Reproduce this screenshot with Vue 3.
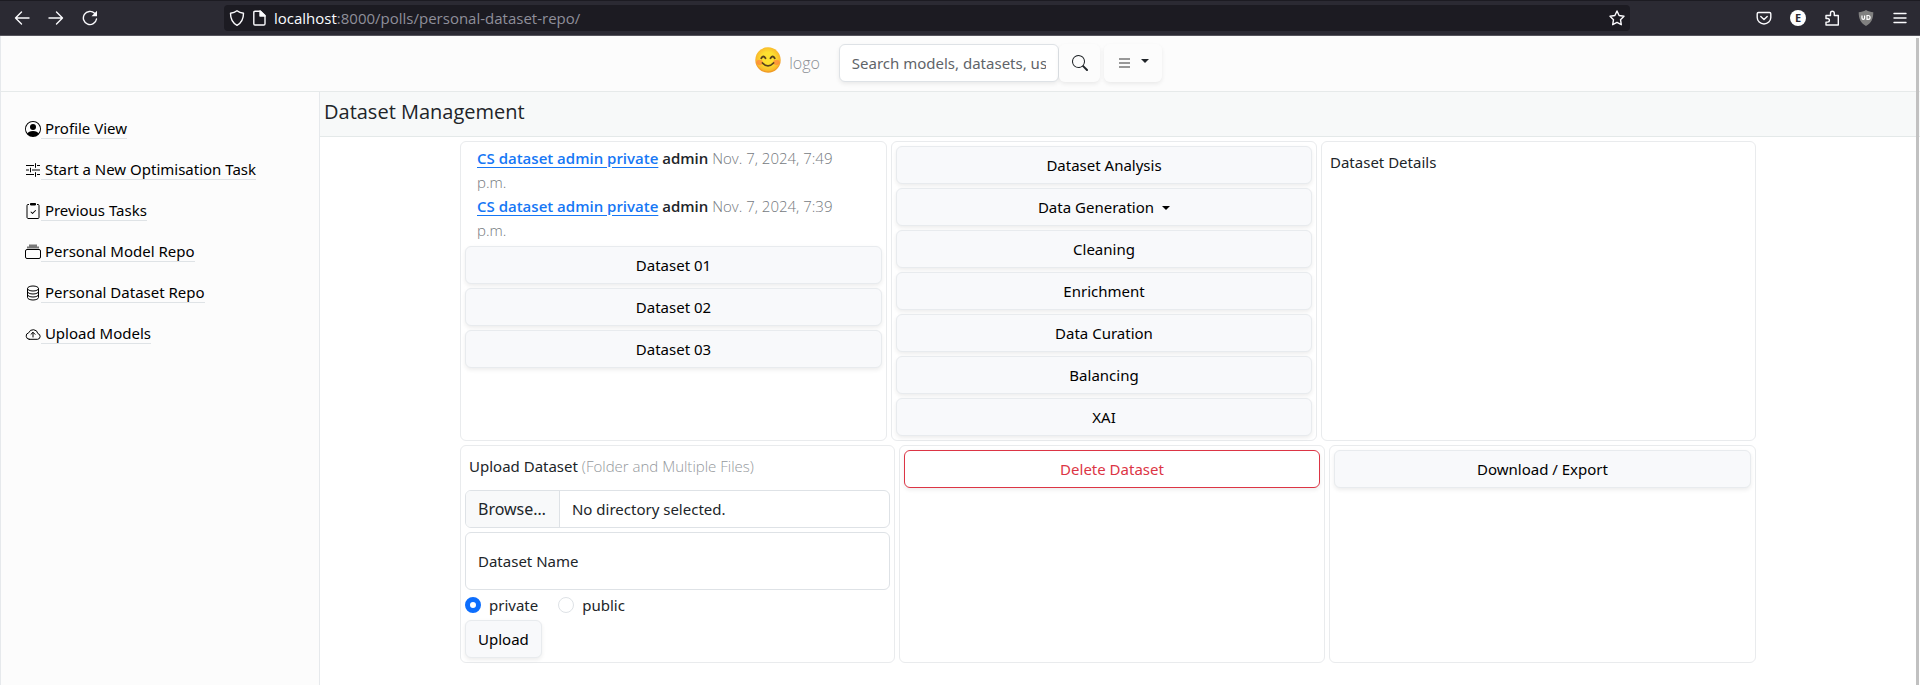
<script setup>
import { ref } from 'vue'

const navItems = [
  { label: 'Profile View', icon: 'person' },
  { label: 'Start a New Optimisation Task', icon: 'sliders' },
  { label: 'Previous Tasks', icon: 'clipboard' },
  { label: 'Personal Model Repo', icon: 'collection' },
  { label: 'Personal Dataset Repo', icon: 'database' },
  { label: 'Upload Models', icon: 'cloud' },
]

const records = [
  { name: 'CS dataset admin private', owner: 'admin', date: 'Nov. 7, 2024, 7:49 p.m.' },
  { name: 'CS dataset admin private', owner: 'admin', date: 'Nov. 7, 2024, 7:39 p.m.' },
]

const datasets = ['Dataset 01', 'Dataset 02', 'Dataset 03']

const actions = [
  { label: 'Dataset Analysis' },
  { label: 'Data Generation', menu: true },
  { label: 'Cleaning' },
  { label: 'Enrichment' },
  { label: 'Data Curation' },
  { label: 'Balancing' },
  { label: 'XAI' },
]

const visibility = ref('private')
const datasetName = ref('')
</script>

<template>
  <div class="window">
    <div class="toolbar">
      <div class="tools">
        <button class="tool" aria-label="Back">
          <svg viewBox="0 0 16 16" class="line"><path d="M15 8H1.500M7.500 2 1.500 8l6 6" /></svg>
        </button>
        <button class="tool" aria-label="Forward">
          <svg viewBox="0 0 16 16" class="line"><path d="M1 8h13.500M8.500 2l6 6-6 6" /></svg>
        </button>
        <button class="tool" aria-label="Reload">
          <svg viewBox="0 0 16 16" class="line"><path d="M14.500 9A6.600 6.600 0 1 1 12.600 3.300L14 4.700" /><path d="M15 .8v5.500H9.500z" fill="#fbfbfe" stroke="none" /></svg>
        </button>
      </div>
      <div class="address">
        <svg viewBox="0 0 16 16" class="line"><path d="M8 .8c2 1.600 4 2.200 6.500 2.500C14.500 9 12.500 13 8 15.300 3.500 13 1.500 9 1.500 3.300 4 3 6 2.400 8 .8z" /></svg>
        <svg viewBox="0 0 16 16" class="line"><path d="M4 1.200h5.500L14 5.500v8.300q0 1.200-1.200 1.200H4q-1.200 0-1.200-1.200V2.400q0-1.200 1.200-1.200z" /><path d="M9 1v5h5z" fill="#fbfbfe" /></svg>
        <span class="url"><b>localhost</b>:8000/polls/personal-dataset-repo/</span>
        <svg viewBox="0 0 16 16" class="line"><path d="m8 1 2.100 4.500 4.900.7-3.500 3.500.8 5L8 12.400l-4.300 2.300.8-5L1 6.200l4.900-.7z" /></svg>
      </div>
      <div class="extensions">
        <button class="tool" aria-label="Pocket">
          <svg viewBox="0 0 16 16" class="line"><path d="M2.500 2.500h11q1.300 0 1.300 1.300V7.500a6.800 6.500 0 0 1-13.600 0V3.800q0-1.300 1.300-1.300z" /><path d="m4.800 6.500 3.200 3 3.200-3" /></svg>
        </button>
        <button class="tool" aria-label="Account"><span class="avatar">E</span></button>
        <button class="tool" aria-label="Extensions">
          <svg viewBox="0 0 16 16" class="line"><path d="M2 15h12.300V5.500h-4V3.200a1.900 1.900 0 0 0-3.800 0v2.300H2v3h1.600a1.800 1.800 0 0 1 0 3.600H2z" /></svg>
        </button>
        <button class="tool" aria-label="Ad blocker">
          <svg viewBox="0 0 16 16"><path d="M8 0c2.500 1.500 4.500 1.800 7.300 2.200C15.300 8.500 13.500 13 8 16 2.500 13 .7 8.500.7 2.200 3.500 1.800 5.500 1.500 8 0z" fill="#808080" /><path d="M4 5.500V8a1.300 1.300 0 0 0 2.600 0V5.500M9 5.500h1.200a1.900 1.900 0 0 1 0 3.800H9z" fill="none" stroke="#fff" stroke-width="1.200" /></svg>
        </button>
        <button class="tool" aria-label="Menu">
          <svg viewBox="0 0 16 16" class="line"><path d="M2 3.500h12M2 8h12M2 12.500h12" /></svg>
        </button>
      </div>
    </div>

    <div class="page">
      <header class="header">
        <a class="brand" href="#">
          <svg viewBox="0 0 26 26">
            <defs>
              <radialGradient id="face" cx="50%" cy="45%" r="52%">
                <stop offset="50%" stop-color="#fde030" />
                <stop offset="90%" stop-color="#f9b92b" />
                <stop offset="100%" stop-color="#f09a24" />
              </radialGradient>
            </defs>
            <circle cx="13" cy="13" r="12.700" fill="url(#face)" />
            <ellipse cx="4.700" cy="15.300" rx="3.300" ry="2.600" fill="#ff7043" opacity=".55" />
            <ellipse cx="21.300" cy="15.300" rx="3.300" ry="2.600" fill="#ff7043" opacity=".55" />
            <g fill="none" stroke="#59411c" stroke-width="1.800" stroke-linecap="round">
              <path d="M6.300 11.300q2-3.600 4.200 0M15.500 11.300q2.200-3.600 4.200 0" />
              <path d="M7.500 16q5.500 5.800 11 0" />
            </g>
          </svg>
          <span>logo</span>
        </a>
        <form class="search" @submit.prevent>
          <input type="text" aria-label="Search" placeholder="Search models, datasets, users" />
          <button class="ghost" aria-label="Submit search">
            <svg viewBox="0 0 16 16" fill="#212529"><path d="M11.742 10.344a6.500 6.500 0 1 0-1.397 1.398h-.001c.03.04.062.078.098.115l3.850 3.850a1 1 0 0 0 1.415-1.414l-3.850-3.850a1.007 1.007 0 0 0-.115-.1zM12 6.500a5.500 5.500 0 1 1-11 0 5.500 5.500 0 0 1 11 0z" /></svg>
          </button>
        </form>
        <button class="ghost menu" aria-label="Open menu">
          <svg viewBox="0 0 12 16" class="burger"><path d="M0 4h11M0 8h11M0 12h11" stroke="#777" stroke-width="1.700" /></svg>
          <i class="caret"></i>
        </button>
      </header>

      <div class="body">
        <nav class="sidebar">
          <a v-for="item in navItems" :key="item.label" href="#">
            <svg viewBox="0 0 16 16" fill="#000">
              <template v-if="item.icon === 'person'">
                <path d="M11 6a3 3 0 1 1-6 0 3 3 0 0 1 6 0z" />
                <path fill-rule="evenodd" d="M0 8a8 8 0 1 1 16 0A8 8 0 0 1 0 8zm8-7a7 7 0 0 0-5.468 11.370C3.242 11.226 4.805 10 8 10s4.757 1.225 5.468 2.370A7 7 0 0 0 8 1z" />
              </template>
              <path v-else-if="item.icon === 'sliders'" d="M1 3.500h8M12 3.500h3M10.500 1.200v4.600M1 8h3M7 8h8M5.500 5.700v4.600M1 12.500h8M12 12.500h3M10.500 10.200v4.600" fill="none" stroke="#000" />
              <template v-else-if="item.icon === 'clipboard'">
                <path fill-rule="evenodd" d="M10.854 7.146a.5.5 0 0 1 0 .708l-3 3a.5.5 0 0 1-.708 0l-1.500-1.500a.5.5 0 1 1 .708-.708L7.500 9.793l2.646-2.647a.5.5 0 0 1 .708 0z" />
                <path d="M4 1.500H3a1 1 0 0 0-1 1v12a1.500 1.500 0 0 0 1 1h10a1 1 0 0 0 1-1v-12a1 1 0 0 0-1-1h-1" fill="none" stroke="#000" />
                <path d="M5.500.5h5v1.500h-5z" stroke="#000" />
              </template>
              <template v-else-if="item.icon === 'collection'">
                <path d="M4 1.500h8M2 3.500h12" stroke="#777" stroke-width="2" />
                <rect x=".5" y="5.500" width="15" height="9" rx="1.500" fill="none" stroke="#000" />
              </template>
              <g v-else-if="item.icon === 'database'" fill="none" stroke="#000">
                <ellipse cx="8" cy="3.500" rx="5.500" ry="2.500" />
                <path d="M2.500 3.500v9c0 1.400 2.500 2.500 5.500 2.500s5.500-1.100 5.500-2.500v-9M2.500 6.500C2.500 7.900 5 9 8 9s5.500-1.100 5.500-2.500M2.500 9.500C2.500 10.900 5 12 8 12s5.500-1.100 5.500-2.500" />
              </g>
              <g v-else fill="none" stroke="#000" stroke-linecap="round" stroke-linejoin="round">
                <path d="M4.200 13.300h8.400a2.900 2.900 0 0 0 .3-5.700A4.800 4.800 0 0 0 3.700 6.800 3.300 3.300 0 0 0 4.200 13.300z" />
                <path d="M8 11V6.500M6 8.300l2-2 2 2" />
              </g>
            </svg>
            <span>&nbsp;{{ item.label }}</span>
          </a>
        </nav>

        <main class="content">
          <h1>Dataset Management</h1>
          <div class="grid">
            <div class="row row-top">
              <section class="panel">
                <div class="records">
                  <p v-for="record in records" :key="record.date">
                    <a href="#">{{ record.name }}</a> <strong>{{ record.owner }}</strong>
                    <span class="light">{{ ' ' + record.date }}</span>
                  </p>
                </div>
                <button v-for="name in datasets" :key="name" class="btn">{{ name }}</button>
              </section>
              <section class="panel">
                <button v-for="action in actions" :key="action.label" class="btn">
                  {{ action.label }}<i v-if="action.menu" class="caret"></i>
                </button>
              </section>
              <section class="panel">
                <h2>Dataset Details</h2>
              </section>
            </div>

            <div class="row row-bottom">
              <form class="panel" @submit.prevent>
                <h2 class="upload-title">Upload Dataset <span class="light">(Folder and Multiple Files)</span></h2>
                <label class="file" for="folder">
                  <span class="browse">Browse…</span>
                  <span class="chosen">No directory selected.</span>
                  <input id="folder" type="file" webkitdirectory multiple />
                </label>
                <input v-model="datasetName" class="name" type="text" aria-label="Dataset Name" placeholder="Dataset Name" />
                <div class="radios">
                  <label><input v-model="visibility" type="radio" name="visibility" value="private" />private</label>
                  <label><input v-model="visibility" type="radio" name="visibility" value="public" />public</label>
                </div>
                <button class="btn upload">Upload</button>
              </form>
              <section class="panel">
                <button class="btn danger">Delete Dataset</button>
              </section>
              <section class="panel">
                <button class="btn">Download / Export</button>
              </section>
            </div>
          </div>
        </main>
      </div>
      <div class="scroll-thumb"></div>
    </div>
  </div>
</template>

<style>
body {
  margin: 0;
  background: #fff;
}
</style>

<style scoped>
* {
  box-sizing: border-box;
}
.window {
  display: flex;
  flex-direction: column;
  min-height: 100vh;
  font-family: "Noto Sans", "Open Sans", sans-serif;
  font-size: 15px;
  line-height: 24px;
  color: #212529;
}
button,
input {
  font: inherit;
  color: inherit;
}
button {
  cursor: pointer;
}
svg {
  display: block;
  flex: none;
  width: 16px;
  height: 16px;
}

/* Browser toolbar */
.toolbar {
  display: flex;
  align-items: center;
  height: 36px;
  padding: 0 12px 0 14px;
  background: #2b2a33;
  border-top: 1px solid #1c1b22;
  border-bottom: 1px solid #55545c;
}
.line {
  fill: none;
  stroke: #fbfbfe;
  stroke-width: 1.4;
  stroke-linecap: round;
  stroke-linejoin: round;
}
.tools,
.extensions {
  display: flex;
  gap: 18px;
}
.tool {
  display: block;
  padding: 0;
  border: 0;
  background: none;
}
.address {
  display: flex;
  flex: 1;
  align-items: center;
  gap: 6px;
  height: 26px;
  margin: 0 126px;
  padding: 0 5px;
  background: #1c1b22;
  border-radius: 4px;
}
.url {
  flex: 1;
  margin-left: 1px;
  font-family: "Open Sans", sans-serif;
  color: #8f8f9a;
}
.url b {
  font-weight: 400;
  color: #fbfbfe;
}
.avatar {
  display: block;
  width: 16px;
  height: 16px;
  background: #fff;
  border-radius: 50%;
  color: #2b2a33;
  font-size: 11px;
  font-weight: 700;
  line-height: 16px;
}

/* Page header */
.page {
  position: relative;
  display: flex;
  flex: 1;
  flex-direction: column;
  border-left: 1px solid #e6e9ec;
}
.scroll-thumb {
  position: absolute;
  top: 2px;
  right: 1px;
  bottom: 0;
  width: 3px;
  background: #c1c1c1;
}
.header {
  display: flex;
  justify-content: center;
  align-items: center;
  height: 56px;
  padding: 0 4px 1px 0;
  background: #fcfcfc;
  border-bottom: 1px solid #e6eaea;
}
.brand {
  display: flex;
  align-items: center;
  gap: 8px;
  margin-right: 19px;
  color: #8a8f94;
  font-family: "Open Sans", sans-serif;
  font-size: 16px;
  font-weight: 300;
  text-decoration: none;
}
.brand svg {
  width: 26px;
  height: 26px;
  margin-bottom: 6px;
}
.search {
  display: flex;
  margin-right: 4px;
}
.search input {
  width: 220px;
  height: 38px;
  padding: 0 12px;
  background: #fff;
  border: 1px solid #dee2e6;
  border-radius: 6px;
  box-shadow: 0 2px 4px rgba(0, 0, 0, 0.075);
}
.search input::placeholder {
  color: #5f6469;
}
.ghost {
  display: flex;
  align-items: center;
  height: 38px;
  padding: 0 12px 0 13px;
  background: #fcfcfc;
  border: 0;
  border-radius: 6px;
  box-shadow: 0 2px 4px rgba(0, 0, 0, 0.075);
}
.menu {
  gap: 10px;
  padding: 0 13px 0 15px;
}
.burger {
  width: 12px;
}
.caret {
  display: inline-block;
  border: 4px solid transparent;
  border-top-color: currentColor;
  border-bottom: 0;
}
.menu .caret {
  margin-bottom: 4px;
}

/* Sidebar */
.body {
  display: flex;
  flex: 1;
}
.sidebar {
  display: flex;
  flex: none;
  flex-direction: column;
  gap: 17px;
  width: 319px;
  padding: 24px;
  background: #fcfcfc;
  border-right: 1px solid #e6e9ec;
}
.sidebar a {
  display: flex;
  align-items: center;
  height: 24px;
  color: #000;
  text-decoration: none;
}
.sidebar svg {
  margin-top: 2px;
}
.sidebar span {
  line-height: 20px;
  border-bottom: 1px solid #dfe3e6;
}

/* Content */
.content {
  flex: 1;
  min-width: 0;
}
h1 {
  margin: 0;
  padding: 8px 4px 12px;
  background: #f7f9f9;
  border-bottom: 1px solid #e4e9e9;
  font-family: "Open Sans", sans-serif;
  font-size: 20px;
  font-weight: 500;
  line-height: 24px;
}
.grid {
  display: flex;
  flex-direction: column;
  gap: 4px;
  max-width: 1320px;
  margin: 4px auto 0;
  padding-right: 24px;
}
.row {
  display: grid;
  gap: 4px;
}
.row-top {
  grid-template-columns: 427fr 426fr 435fr;
}
.row-bottom {
  grid-template-columns: 435fr 426fr 427fr;
}
.panel {
  display: flex;
  flex-direction: column;
  gap: 4px;
  min-width: 0;
  padding: 4px;
  border: 1px solid #e9ebed;
  border-radius: 6px;
}
.records {
  padding: 0 12px;
  font-family: "Open Sans", sans-serif;
}
.records p {
  max-width: 370px;
  margin: 0;
}
.records a {
  color: #1677f5;
  font-weight: 600;
  text-underline-offset: 3px;
}
.records strong {
  font-weight: 600;
}
.light {
  color: #74797e;
  font-family: "Open Sans", sans-serif;
  font-weight: 300;
}
.btn {
  display: block;
  width: 100%;
  height: 38px;
  padding: 0 12px;
  background: #f8f9fb;
  border: 1px solid #e8ebee;
  border-radius: 6px;
  box-shadow: 0 2px 4px rgba(0, 0, 0, 0.075);
  color: #000;
}
.btn .caret {
  margin-left: 8px;
  vertical-align: 3px;
}
.danger {
  background: #fff;
  border-color: #dc3545;
  color: #dc3545;
}
h2 {
  margin: 0;
  padding: 4px;
  font-size: 15px;
  font-weight: 400;
  line-height: 24px;
}
.upload-title {
  margin-bottom: 4px;
}
.upload-title .light {
  color: #94989c;
}
.file {
  position: relative;
  display: flex;
  height: 38px;
  overflow: hidden;
  border: 1px solid #dee2e6;
  border-radius: 6px;
  line-height: 36px;
}
.file input {
  position: absolute;
  inset: 0;
  opacity: 0;
}
.browse {
  padding: 0 13px 0 12px;
  background: #f8f9fa;
  border-right: 1px solid #dee2e6;
  font-size: 16px;
}
.chosen {
  padding: 0 12px;
}
.name {
  width: 100%;
  height: 58px;
  padding: 0 12px;
  background: #fff;
  border: 1px solid #dee2e6;
  border-radius: 6px;
}
.name::placeholder {
  color: #212529;
}
.radios {
  display: flex;
  gap: 20px;
  height: 22px;
}
.radios label {
  display: flex;
  align-items: center;
  gap: 8px;
}
.radios input {
  appearance: none;
  width: 16px;
  height: 16px;
  margin: 0;
  background: #fff;
  border: 1px solid #dee2e6;
  border-radius: 50%;
}
.radios input:checked {
  border: 5px solid #0d6efd;
}
.upload {
  width: auto;
  align-self: flex-start;
}
</style>
